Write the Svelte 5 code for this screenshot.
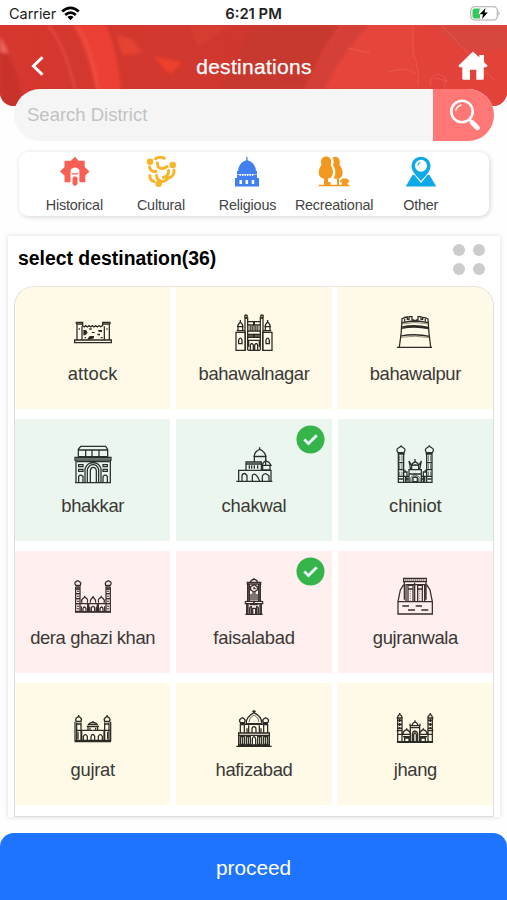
<script>
  const categories = ['Historical', 'Cultural', 'Religious', 'Recreational', 'Other'];

  const places = [
    { name: 'attock', tone: 'cream', box: '187 81 120 120', track: 0.15 },
    { name: 'bahawalnagar', tone: 'cream', box: '672 81 120 120' },
    { name: 'bahawalpur', tone: 'cream', box: '437 81 120 120' },
    { name: 'bhakkar', tone: 'mint', box: '187 87 120 120' },
    { name: 'chakwal', tone: 'mint', box: '672 87 120 120', track: -0.2, picked: true },
    { name: 'chiniot', tone: 'mint', box: '437 87 120 120', track: -0.1 },
    { name: 'dera ghazi khan', tone: 'rose', box: '187 84 120 120' },
    { name: 'faisalabad', tone: 'rose', box: '672 84 120 120', track: -0.25, picked: true },
    { name: 'gujranwala', tone: 'rose', box: '437 84 120 120' },
    { name: 'gujrat', tone: 'cream', box: '217 84 120 120', track: -0.3 },
    { name: 'hafizabad', tone: 'cream', box: '702 84 120 120', track: -0.3 },
    { name: 'jhang', tone: 'cream', box: '428 84 120 120' }
  ];
</script>

<main>
  <div class="status">
    <div class="carrier">
      <span>Carrier</span>
      <svg width="19" height="15" viewBox="0 0 19 15" fill="none" stroke="#000" stroke-width="2.700">
        <path d="M1.2 5.5Q9.500 -1.900 17.800 5.500M4.200 8.900Q9.500 4.200 14.800 8.900" />
        <path d="M6.400 11Q9.500 8.300 12.600 11L9.500 14.300Z" fill="#000" stroke="none" />
      </svg>
    </div>
    <b>6:21 PM</b>
    <svg class="battery" width="31" height="15" viewBox="0 0 31 15">
      <rect x=".8" y=".8" width="26.500" height="13.200" rx="3.800" fill="#fff" stroke="#aaa" stroke-width="1.100" />
      <path d="M4.500 2.500H10L8.500 8H10V12.500H4.500Q2.500 12.500 2.500 10.500V4.500Q2.500 2.500 4.500 2.500Z" fill="#35c759" />
      <path d="M15.500 2L9.700 8.300H13L12 13L17.800 6.500H14.500Z" fill="#000" />
      <path d="M28.500 5Q31 7.400 28.500 9.800Z" fill="#aaa" />
    </svg>
  </div>

  <header>
    <svg class="texture" width="507" height="81" viewBox="0 0 507 81" preserveAspectRatio="none">
      <defs>
        <linearGradient id="ground" x1="0" x2="1" y1="0" y2="0">
          <stop offset="0" stop-color="#d6372f" />
          <stop offset=".5" stop-color="#cf382e" />
          <stop offset=".72" stop-color="#e2433a" />
          <stop offset="1" stop-color="#e34239" />
        </linearGradient>
        <filter id="soft" x="-10%" y="-10%" width="120%" height="120%"><feGaussianBlur stdDeviation="1.500" /></filter>
      </defs>
      <rect width="507" height="81" fill="url(#ground)" />
      <g filter="url(#soft)">
        <path d="M0 15Q18 42 24 81H0Z" fill="#c9322c" />
        <path d="M0 12Q9 25 8 29L0 27Z" fill="#ec625a" />
        <path d="M72 0Q88 22 99 81H122Q119 30 106 0Z" fill="#ec4134" />
        <path d="M48 0Q65 20 75 64" fill="none" stroke="#f0574c" stroke-width="1.300" />
        <path d="M76 0Q91 20 98 64" fill="none" stroke="#f0665d" stroke-width="1" />
        <path d="M117 10L132 14L142 28L122 30Z" fill="#e64231" />
        <path d="M153 31L181 37L172 49L166 46Z" fill="#ee4029" />
        <path d="M189 0L198 22L230 0Z" fill="#d63c32" />
        <path d="M253 0H340Q315 31 307 64H220Z" fill="#c7372e" />
        <path d="M343 0Q322 25 304 64H325Q342 27 370 0Z" fill="#d44138" />
        <path d="M370 0Q342 27 325 64H418L413 0Z" fill="#e5443a" />
        <path d="M430 0H507V25L467 26Z" fill="#d8463e" />
      </g>
      <path d="M413 0V28Q420 45 418 61M441 0L463 23L494 55M430 61Q431 48 438 49Q450 51 444 62M434 53L448 56M348 23L370 28M388 47Q408 41 416 49" fill="none" stroke="#ec6961" stroke-width="1" opacity=".55" />
    </svg>
    <div class="bar">
      <svg width="14" height="22" viewBox="0 0 14 22" fill="none" stroke="#fff" stroke-width="3"><path d="M11.500 2.200L2.500 11L11.500 19.800" /></svg>
      <h1>destinations</h1>
      <svg width="30" height="30" viewBox="0 0 30 30" fill="#fff"><path d="M15 .5L21.300 6.500V4H26V11L29.700 14.700L28.300 16.300H25.800V27.500Q25.800 28.700 24.600 28.700H18.300V18.800H12V28.700H5.500Q4.300 28.700 4.300 27.500V16.300H1.700L.3 14.700Z" /></svg>
    </div>
  </header>

  <div class="search">
    <span>Search District</span>
    <div class="go">
      <svg width="34" height="34" viewBox="0 0 34 34" fill="none" stroke="#fff">
        <circle cx="14" cy="12.500" r="10.700" stroke-width="2.500" />
        <path d="M7.500 11.500Q9 7 13.500 6" stroke-width="1.400" />
        <path d="M21 20L24 23" stroke-width="2.500" />
        <path d="M24.300 23.700L29.300 28.700" stroke-width="5" stroke-linecap="round" />
      </svg>
    </div>
  </div>

  <nav>
    {#each categories as c}
      <div class="cat">
        <svg width="32" height="32" viewBox="0 0 32 32">
          {#if c === 'Historical'}
            <path fill="#f95f53" d="M17 .7L20.500 4.800H26.700V11L31.500 15.500L27.300 19.500V26.300H21.400V15Q21.400 12 17 11.500Q12.500 12 12.500 15V26.300H6.500V19.500L2 15.500L6.500 11V4.800H13Z" />
            <path fill="#f95f53" d="M13.800 17.300H20.200V18.500H13.800ZM14.500 22Q17 18.700 19.500 22V28L17 30.300L14.500 28Z" />
          {:else if c === 'Cultural'}
            <g fill="none" stroke="#f9b52a" stroke-width="3" stroke-linecap="round">
              <path d="M10.500 2.800Q15 .2 19.300 2.300M4.500 11Q5.500 16 11 15.500M12.500 7Q12 12.500 17 12.500Q19.500 12.500 22 10.500M29 14Q29.500 20.500 23.500 22M23.500 14.500Q24 20 18.500 21.500M5 19.500Q4.500 24.500 9 25.500M11.500 19.500Q12 24 16.500 25.500Q20 26 22 23" />
            </g>
            <g fill="#f9b52a"><circle cx="5" cy="5.800" r="3.300" /><circle cx="27.700" cy="9" r="3.300" /><circle cx="13.700" cy="27.700" r="3.300" /></g>
          {:else if c === 'Religious'}
            <path fill="#4280f0" d="M15.200 1H16.500V4.200Q23 6 24.800 13V15H26V18H6V15H7.200V13Q9 6 15.200 4.200ZM6 18.500H26V22H28V30.500H4V22H6Z" />
            <path d="M8.500 19H23.500" stroke="#fff" stroke-width="2.200" stroke-dasharray="1.300 1.200" />
            <path d="M9.700 24V28M15.800 24V28M22 24V28" stroke="#fff" stroke-width="2.500" />
          {:else if c === 'Recreational'}
            <path fill="#f3981f" d="M8 .5C12.500.5 14.300 4.500 12.500 9C16.500 14 15.500 22 10 22.500V26H12.500V28.700H19V22.800C16.500 22.800 15.500 22 15.500 22C18.500 18 17.500 12.500 15 9.500C16.300 6 15.500 3 14.500 1.500C19-.8 23 2 21.500 9C26 14 25.500 21.500 21 22.500V28.700H24V26.500H22.300V24.500L24.500 22.500H29L31 24.500V26.500H29.500V28.700H31.500V30.200H.7V28.700H6V22.500C-.5 22-.5 14 3.500 9C2 4.500 4 .5 8 .5Z" />
          {:else}
            <path fill="#0da9e8" fill-rule="evenodd" d="M16 .8C21.300.8 25.500 5 25.500 10C25.500 16 20 20 16 25C12 20 6.500 16 6.500 10C6.500 5 10.700.8 16 .8ZM16 3.700A6 6 0 1 0 16 15.700A6 6 0 1 0 16 3.700ZM7.500 19H9.500L16 27L22.500 19H24.500L31.300 30.500H.7Z" />
            <path d="M12.800 9.500Q13.200 7 15.500 6.500" fill="none" stroke="#0da9e8" stroke-width="1.200" />
          {/if}
        </svg>
        <span>{c}</span>
      </div>
    {/each}
  </nav>

  <section>
    <div class="title">
      <h2>select destination(36)</h2>
      <div class="dots"><i></i><i></i><i></i><i></i></div>
    </div>
    <div class="grid">
      {#each places as p}
        <div class="tile {p.tone}">
          <svg class="art" width="40" height="40" viewBox={p.box}>
            {#if p.name === 'attock'}
              <path d="M197 117V112H216V122L221 126L225 122L230 126L235 122L240 126L245 122L250 126L255 122L260 126L265 122L270 125L276 122V112H298V117M199 118V165M214 124V165M281 124V165M296 118V165M192 165H302V173H192ZM197 117H216M276 117H298" />
              <path d="M218 135H226L231 143L224 151H218ZM237 153H250V160L236 164L230 162ZM262 135H274V142L264 140ZM260 146H268V151H260ZM244 141H252V144H244Z" fill="#2b2b24" stroke="none" />
              <path d="M206 130V134M289 130V134M222 158H226M270 158H276M236 132H243" />
            {:else if p.name === 'bahawalnagar'}
              {#each [0, 1] as side}
                <g transform={side ? 'matrix(-1 0 0 1 1464 0)' : undefined}>
                  <path d="M678 142H706V196H678ZM684 137V125H698V137M680 137H704M683 125Q684 117 691 111Q698 117 699 125ZM691 105V112M686 165Q691 154 696 165V176H686ZM703 99H713V195M705 99V195" />
                  <circle cx="708" cy="94" r="4" />
                  <path d="M713 110H733V120H713M713 138H732M713 148H732V157H713M716 185V166H732M713 196H732M721 194V180Q725 171 730 180V194M722 123V136M728 123V136" />
                  <path d="M713 122H733V136H713Z" fill="#777368" stroke="none" opacity=".6" />
                  <path d="M713 150H733V156H713Z" fill="#2b2b24" stroke="none" opacity=".75" />
                </g>
              {/each}
            {:else if p.name === 'bahawalpur'}
              <path d="M443 187H548M450 186Q457 146 458 101Q466 96 474 96V103H479V95H488V105H493V108H501V105H506V95H515V103H520V97Q530 98 536 102Q538 146 544 186" />
              <path d="M458 113Q497 103 537 113M456 126Q497 118 538 127M456 130Q497 122 538 131M453 153Q497 145 542 154M466 101V109M528 101V109" />
              <path d="M458 117Q497 108 537 117M454 157Q497 150 542 158" stroke-width="1.500" />
            {:else if p.name === 'bhakkar'}
              <path d="M210 94H285L291 103V125H203V103ZM203 105H291M225 106V125M244 106V125M265 106V125M193 127H301V135H193ZM196 136V203H299V136M193 203H301" />
              <path d="M198 140H297M230 201V163Q236 149 247 149Q259 149 264 163V201M223 201V161Q229 144 247 143Q266 144 271 161V201M239 201V167Q240 157 247 157Q256 157 257 167V201M204 149H217V155H204ZM204 163H217V169H204ZM277 149H290V155H277ZM277 163H290V169H277ZM204 201V184Q210 177 217 184V201M277 201V184Q284 177 290 184V201" />
              <path d="M196 129H299V134H196Z" fill="#6c7470" stroke="none" />
            {:else if p.name === 'chakwal'}
              <path d="M679 199H787M686 198V166H724M696 198V181Q702 170 711 181V198M708 166V141H754V166M708 147H754M718 151V161M725 151V161M733 151V161M743 151V161M733 140V125H767V150M732 124Q735 108 749 103Q764 109 768 124ZM749 97V104M756 151Q759 141 768 137Q779 141 783 151ZM768 131V137M758 153V165H780V153M754 166H783V198M724 166H756M727 198V181Q732 173 740 182Q749 195 748 198M757 198V183Q765 169 777 183V198" />
            {:else if p.name === 'chiniot'}
              {#each [0, 1] as side}
                <g transform={side ? 'matrix(-1 0 0 1 995 0)' : undefined}>
                  <path d="M446 113Q439 103 447 99L455 94L463 99Q470 103 464 113ZM455 91V96M447 114V202M463 114V202M445 117H466M447 143H463M447 164H463M445 202H498M447 184H478M463 171H473V202M479 202V164H498M479 177H498M484 164L479 138L487 151L498 150M487 162V150Q488 145 498 140" />
                  <path d="M451 121V139M458 121V139M451 146V162M458 146V162M451 170V182M458 170V182M483 201V190Q486 181 498 180M488 201V190Q491 185 498 185" stroke-width="2" />
                  <path d="M467 164V170M469 185V200M448 192H461M467 192H478" />
                </g>
              {/each}
              <path d="M497 132V140M491 187H504V200H491Z" />
            {:else if p.name === 'dera ghazi khan'}
              {#each [0, 1] as side}
                <g transform={side ? 'matrix(-1 0 0 1 494 0)' : undefined}>
                  <path d="M195 112Q190 104 196 101L201 98L207 101Q213 106 208 112ZM195 117H208V190M195 117V190M193 112H211M195 123H208M195 137H208M195 152H208M195 167H208M193 192H247M208 167H247" />
                  <path d="M202 120V188" stroke-width="6" stroke-dasharray="2 3" />
                  <path d="M214 164Q211 156 216 152L222 147L229 152Q233 157 230 164M239 164Q238 154 247 148M222 143V148M212 190V175M217 190V181Q221 173 226 181V190M232 168V190M237 190V176M242 190V180Q244 175 247 175" />
                  <path d="M193 189H247V193H193ZM229 169H236V190H229Z" fill="#372d2d" stroke="none" />
                </g>
              {/each}
              <path d="M247 144V150" />
            {:else if p.name === 'faisalabad'}
              {#each [0, 1] as side}
                <g transform={side ? 'matrix(-1 0 0 1 1464 0)' : undefined}>
                  <path d="M710 103H732M713 105V158M718 108V158M710 108H732M709 160H732V167H706V161ZM710 168V199M706 199H732M719 199V182Q719 176 724 176V199M714 168V199M719 170H732" />
                  <path d="M723 138V157M729 133V157M721 103Q723 95 732 94" />
                </g>
              {/each}
              <path d="M732 90V95M732 110L742 116V126L732 132L722 126V116ZM732 116V122H737M728 199V181H737V199" />
              <path d="M711 108H717V158H711ZM747 108H753V158H747Z" fill="#372d2d" stroke="none" opacity=".65" />
            {:else if p.name === 'gujranwala'}
              <path d="M463 91H531V101H463ZM465 101V155M530 101V155M463 110L453 126L446 161H549L542 126L532 110M446 161V198H549V161M470 160V110H526V160M474 112H491V160M503 112H519V160M476 112V160M505 112V160M475 123H490M504 123H518M496 104V160M459 174H479M499 174H518M476 186H497M516 186H537" />
              <path d="M468 96H528" stroke-dasharray="3 3" />
              <path d="M483 128V158M511 128V158" stroke-width="2" stroke-dasharray="3 4" />
            {:else if p.name === 'gujrat'}
              {#each [0, 1] as side}
                <g transform={side ? 'matrix(-1 0 0 1 553 0)' : undefined}>
                  <path d="M227 124Q223 119 227 114L234 109L240 114Q245 119 240 124ZM234 105V110M225 125H243M228 128V181M241 128V181M228 132H241M225 151H276M225 181H277M222 185H277M243 151V181M248 180V169Q254 159 260 169V180M271 180V169Q273 163 277 163M262 150V140H276M258 139H277" />
                  <path d="M262 136Q265 128 277 127M268 143V149M232 155V178M223 125V184" />
                </g>
              {/each}
              <path d="M277 123V128M265 133H289" />
              <path d="M223 181H331V186H223Z" fill="#2b2b24" stroke="none" />
            {:else if p.name === 'hafizabad'}
              {#each [0, 1] as side}
                <g transform={side ? 'matrix(-1 0 0 1 1524 0)' : undefined}>
                  <path d="M709 199H762M714 195H762M716 160V195M714 159H762M714 166H762M721 159V134H733V159M720 131H735M721 128Q716 122 721 117L727 113L733 117Q738 122 733 128ZM735 133H762M739 131Q737 111 762 98M746 136V158M756 158V147Q757 140 762 140M741 145V158M721 170H733V193H721ZM739 170H751V193H739ZM757 193V177Q758 170 762 170M727 171V192M745 171V192" />
                  <path d="M747 127Q746 113 762 105" stroke-width="2" />
                </g>
              {/each}
              <path d="M762 90V99M757 94H767M737 131H787" />
            {:else}
              {#each [0, 1] as side}
                <g transform={side ? 'matrix(-1 0 0 1 976 0)' : undefined}>
                  <path d="M435 187H488M436 111Q437 107 442 103Q448 107 449 111V187M436 111V187M442 99V104M433 114H451M436 121H449M436 133H449M436 145H449M433 152H451M436 163H449M449 161V152Q450 150 451 151M450 163H474M452 162Q452 153 463 149Q473 153 474 162M463 145V150M474 186V137H488M474 143H488M473 137V131M479 137Q479 130 488 126M457 186V174H470V186M452 170H472M480 186V160Q481 154 488 153M484 186V164Q485 159 488 159" />
                  <path d="M442 117V148" stroke-width="5" stroke-dasharray="3 3" />
                  <path d="M434 183H488V188H434Z" fill="#2b2b24" stroke="none" />
                </g>
              {/each}
              <path d="M488 121V128" />
            {/if}
          </svg>
          <span style:letter-spacing="{p.track ?? -0.4}px">{p.name}</span>
          {#if p.picked}
            <svg class="check" width="29" height="29" viewBox="0 0 29 29">
              <circle cx="14.500" cy="14.500" r="14" fill="#35b44a" />
              <path d="M8.300 14.500L12.500 18.500L20.800 10.300" fill="none" stroke="#e4f4f7" stroke-width="3" />
            </svg>
          {/if}
        </div>
      {/each}
    </div>
  </section>

  <footer>proceed</footer>
</main>

<style>
  :global(body) { background: #fff; }
  main {
    width: 507px;
    height: 900px;
    overflow: hidden;
    display: flex;
    flex-direction: column;
    background: #fefefe;
    font-family: "Liberation Sans", Arial, sans-serif;
  }
  h1, h2 { margin: 0; }
  svg { display: block; flex: none; }
  .status {
    height: 25px;
    flex: none;
    box-sizing: border-box;
    padding: 2px 6px 0 9px;
    display: grid;
    grid-template-columns: 1fr auto 1fr;
    align-items: center;
    background: #fff;
    font: 14.5px Inter, sans-serif;
    color: #222;
  }
  .carrier { display: flex; align-items: center; gap: 5px; }
  .carrier span { letter-spacing: -0.05px; }
  .status b { font-weight: 600; font-size: 14.8px; padding-right: 3px; }
  .battery { justify-self: end; }
  header {
    height: 81px;
    flex: none;
    display: grid;
    overflow: hidden;
    border-radius: 0 0 14px 14px;
    background: #d6372f;
  }
  .texture, .bar { grid-area: 1 / 1; }
  .bar {
    z-index: 1;
    height: 81px;
    box-sizing: border-box;
    padding: 0 19px 0 31px;
    display: grid;
    grid-template-columns: 30px 1fr 30px;
    align-items: center;
  }
  .bar h1 {
    text-align: center;
    font-size: 21px;
    font-weight: 400;
    letter-spacing: 0.3px;
    color: #fff;
    -webkit-text-stroke: 0.25px #fff;
    padding: 2px 11px 0 0;
  }
  .search {
    position: relative;
    z-index: 2;
    flex: none;
    height: 52px;
    margin: -17px 13px 0 14px;
    border-radius: 26px;
    overflow: hidden;
    display: flex;
    align-items: center;
    justify-content: space-between;
    background: #f5f5f5;
    color: #c2c2c2;
    font-size: 18.5px;
  }
  .search span { padding-left: 13px; }
  .go {
    width: 61px;
    height: 52px;
    box-sizing: border-box;
    padding: 10px 0 0 15px;
    background: #ff7875;
  }
  nav {
    flex: none;
    height: 64px;
    box-sizing: border-box;
    margin: 11px 18px 0 19px;
    padding: 4px 26px 0 12px;
    border-radius: 9px;
    background: #fff;
    box-shadow: 1px 1px 5px rgba(0, 0, 0, 0.17);
    display: grid;
    grid-template-columns: repeat(5, 86.6px);
  }
  .cat { display: flex; flex-direction: column; align-items: center; }
  .cat span {
    margin-top: 9px;
    font-size: 14.4px;
    line-height: 17px;
    letter-spacing: -0.2px;
    color: #444;
    white-space: nowrap;
  }
  section {
    flex: none;
    height: 581px;
    box-sizing: border-box;
    margin: 20px 7px 0 8px;
    padding: 0 6px;
    background: #fff;
    box-shadow: 0 0 5px rgba(0, 0, 0, 0.14);
    display: flex;
    flex-direction: column;
  }
  .title {
    height: 51px;
    flex: none;
    box-sizing: border-box;
    padding: 8px 9px 0 4px;
    display: flex;
    justify-content: space-between;
  }
  h2 { font-size: 19.4px; line-height: 28px; font-weight: 700; color: #000; }
  .dots { display: grid; grid-template-columns: 12px 12px; gap: 7px 8px; align-content: start; }
  .dots i { width: 12px; height: 12px; border-radius: 50%; background: #ccc; }
  .grid {
    flex: 1;
    border: 1px solid #dedede;
    border-top: 0;
    border-radius: 20px 20px 0 0;
    overflow: hidden;
    box-shadow: 0 -1px 0 #e8e4da;
    display: grid;
    grid-template-columns: repeat(3, 1fr);
    grid-auto-rows: 122px;
    gap: 10px 6px;
  }
  .tile {
    position: relative;
    display: flex;
    flex-direction: column;
    align-items: center;
    box-sizing: border-box;
    padding-top: 25px;
  }
  .cream { background: #fff9e8; --ink: #2b2b24; }
  .mint { background: #ebf6ee; --ink: #29302c; }
  .rose { background: #ffefee; --ink: #372d2d; }
  .art { fill: none; stroke: var(--ink); stroke-width: 3.800; }
  .tile span {
    margin-top: 10px;
    font-size: 18.4px;
    line-height: 24px;
    color: #3a3935;
    white-space: nowrap;
  }
  .check { position: absolute; top: 6px; right: 7px; }
  footer {
    flex: none;
    height: 67px;
    margin-top: 16px;
    padding-top: 2px;
    box-sizing: border-box;
    border-radius: 14px 14px 0 0;
    background: #1f74ff;
    color: #fff;
    font-size: 20.8px;
    display: flex;
    align-items: center;
    justify-content: center;
  }
</style>
